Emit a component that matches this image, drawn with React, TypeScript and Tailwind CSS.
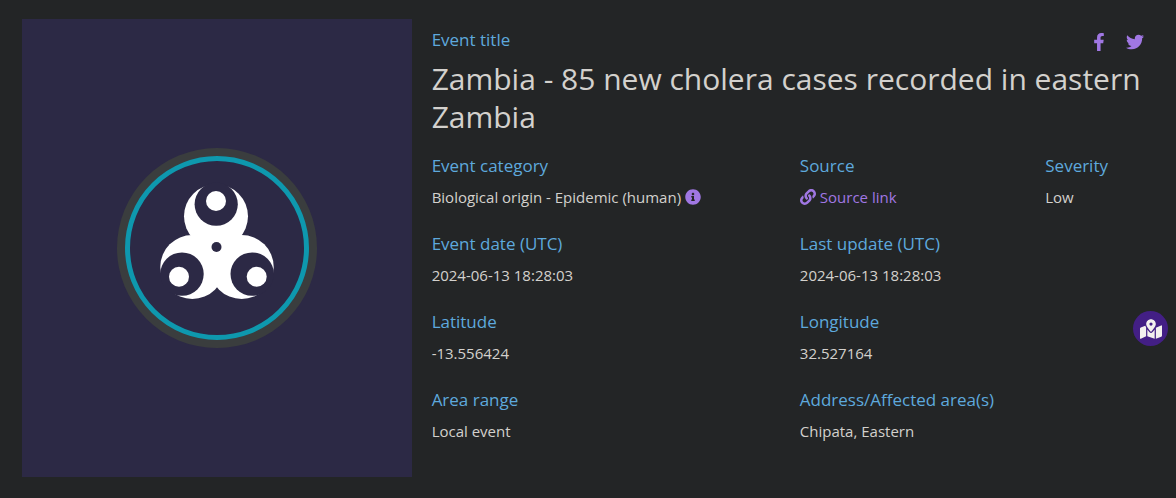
import type { ReactNode } from 'react'
import { FaFacebookF, FaInfoCircle, FaLink, FaMapMarkedAlt, FaTwitter } from 'react-icons/fa'

function EpidemicLogo() {
  return (
    <svg viewBox="0 0 200 200" className="w-[200px] h-[200px]" role="img" aria-label="Epidemic">
      <circle cx="100" cy="100" r="100" fill="#3a3d3e" />
      <circle cx="100" cy="100" r="89.5" fill="#2c2945" stroke="#0e98ae" strokeWidth="5" />
      {/* Lobes */}
      <g fill="#ffffff">
        <circle cx="99" cy="68.3" r="32" />
        <circle cx="75.3" cy="119" r="32" />
        <circle cx="124.7" cy="119" r="32" />
      </g>
      {/* Cut-outs that leave the crescents */}
      <g fill="#2c2945">
        <circle cx="99.2" cy="56.2" r="21.6" />
        <circle cx="65" cy="126.1" r="21.7" />
        <circle cx="135.2" cy="126.1" r="21.7" />
        <circle cx="99.5" cy="99" r="5" />
      </g>
      <g fill="#ffffff">
        <circle cx="99" cy="53" r="10" />
        <circle cx="62" cy="128.7" r="10" />
        <circle cx="139.7" cy="128.7" r="10" />
      </g>
    </svg>
  )
}

function Field({ label, className, children }: { label: string; className: string; children: ReactNode }) {
  return (
    <div className={className}>
      <dt className="text-[17px] leading-6 text-[#5ea9dd] mb-[7px]">{label}</dt>
      <dd className="flex items-center gap-1 text-[15px] leading-6">{children}</dd>
    </div>
  )
}

export default function App() {
  return (
    <main className="min-h-screen bg-[#232526] pt-[19px] pr-2 pb-5 pl-[22px] font-['Segoe_UI','Open_Sans',sans-serif] text-[#d3d1cd]">
      <div className="flex gap-5">
        {/* Left: category picture */}
        <div className="w-[34%] shrink-0 flex items-center justify-center bg-[#2c2945]">
          <EpidemicLogo />
        </div>

        {/* Right: event details */}
        <div className="flex-1 pt-[9px] pb-[34px]">
          <header className="mb-[18px]">
            <div className="flex items-center justify-between mb-2 pr-6">
              <p className="text-[17px] leading-6 text-[#5ea9dd]">Event title</p>
              <div className="flex items-center gap-[18px] pt-1 text-lg text-[#a077e3]">
                <a href="#facebook" aria-label="Share on Facebook">
                  <FaFacebookF />
                </a>
                <a href="#twitter" aria-label="Share on Twitter">
                  <FaTwitter />
                </a>
              </div>
            </div>
            <h1 className="text-[30px] leading-[38px]">
              Zambia - 85 new cholera cases recorded in eastern Zambia
            </h1>
          </header>

          <dl className="grid grid-cols-12 gap-y-[23px]">
            <Field label="Event category" className="col-span-6">
              Biological origin - Epidemic (human)
              <FaInfoCircle className="text-base text-[#a077e3]" />
            </Field>
            <Field label="Source" className="col-span-4">
              <a href="#source" className="flex items-center gap-1 text-[#a077e3]">
                <FaLink className="text-base" />
                Source link
              </a>
            </Field>
            <Field label="Severity" className="col-span-2">Low</Field>

            <Field label="Event date (UTC)" className="col-span-6">2024-06-13 18:28:03</Field>
            <Field label="Last update (UTC)" className="col-span-6">2024-06-13 18:28:03</Field>

            <Field label="Latitude" className="col-span-6">-13.556424</Field>
            <Field label="Longitude" className="col-span-6">32.527164</Field>

            <Field label="Area range" className="col-span-6">Local event</Field>
            <Field label="Address/Affected area(s)" className="col-span-6">Chipata, Eastern</Field>
          </dl>
        </div>
      </div>

      <button
        type="button"
        aria-label="Show map"
        className="fixed right-2 top-[311px] flex items-center justify-center w-[35px] h-[35px] rounded-full bg-[#431f85] text-[22px] text-[#f3f1ee]"
      >
        <FaMapMarkedAlt />
      </button>
    </main>
  )
}
